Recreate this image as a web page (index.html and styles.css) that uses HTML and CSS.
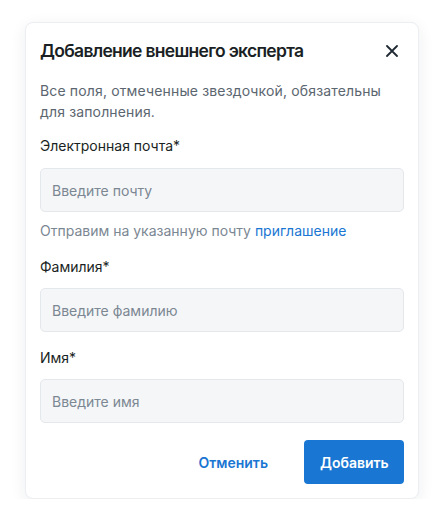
FILE: index.html
```html
<!DOCTYPE html>
<html lang="ru">
<head>
<meta charset="utf-8">
<link rel="stylesheet" href="styles.css">
</head>
<body>
<div class="card">
  <div class="head">
    <h1 class="title">Добавление внешнего эксперта</h1>
    <button class="close" aria-label="Закрыть">
      <svg width="12" height="12" viewBox="0 0 12 12"><path d="M1 1L11 11M11 1L1 11" stroke="#1f2933" stroke-width="1.8" stroke-linecap="round"/></svg>
    </button>
  </div>
  <p class="desc">Все поля, отмеченные звездочкой, обязательны для заполнения.</p>
  <div class="field first">
    <label class="label">Электронная почта*</label>
    <div class="input">Введите почту</div>
    <p class="hint">Отправим на указанную почту <a class="link">приглашение</a></p>
  </div>
  <div class="field">
    <label class="label">Фамилия*</label>
    <div class="input">Введите фамилию</div>
  </div>
  <div class="field">
    <label class="label">Имя*</label>
    <div class="input">Введите имя</div>
  </div>
  <div class="actions">
    <button class="btn btn-text">Отменить</button>
    <button class="btn btn-primary">Добавить</button>
  </div>
</div>
</body>
</html>
```
FILE: styles.css
```css
* { box-sizing: border-box; }
html, body { margin: 0; padding: 0; background: #ffffff; }
body {
  font-family: Inter, Roboto, "Noto Sans", sans-serif;
  color: #1f2933;
  padding: 22px 0 0 25px;
}
.card {
  width: 394px;
  height: 477px;
  background: #fff;
  border: 1px solid #eceef1;
  border-radius: 8px;
  box-shadow: 0 4px 16px rgba(30, 40, 60, 0.08);
  padding: 16px 14px 14px 14px;
  display: flex;
  flex-direction: column;
}
.head {
  display: flex;
  justify-content: space-between;
  align-items: center;
}
.title {
  margin: 0;
  font-size: 17.5px;
  line-height: 24px;
  font-weight: 600;
  color: #1a1f24;
  letter-spacing: -0.7px;
}
.close {
  width: 24px;
  height: 24px;
  border: 0;
  background: none;
  padding: 0;
  display: flex;
  align-items: center;
  justify-content: center;
}
.desc {
  margin: 17px 0 0;
  max-width: 345px;
  font-size: 14px;
  line-height: 21px;
  color: #5b6670;
  letter-spacing: 0.15px;
}
.field { display: flex; flex-direction: column; margin-top: 16px; }
.field.first { margin-top: 14px; }
.label {
  font-size: 14px;
  line-height: 20px;
  color: #1a1f24;
  margin-bottom: 11px;
}
.field.first .label { margin-bottom: 12px; }
.input {
  height: 44px;
  background: #f5f6f8;
  border: 1px solid #e4e7eb;
  border-radius: 5px;
  padding: 0 11px;
  display: flex;
  align-items: center;
  font-size: 14px;
  color: #7b8792;
}
.hint {
  margin: 8px 0 0;
  font-size: 14px;
  line-height: 21px;
  color: #7b8792;
}
.link { color: #1976d2; }
.actions {
  margin-top: 17px;
  display: flex;
  justify-content: flex-end;
  gap: 20px;
}
.btn {
  height: 44px;
  border: 0;
  border-radius: 4px;
  padding: 0 16px;
  font-family: Inter, Roboto, "Noto Sans", sans-serif;
  font-size: 14px;
  font-weight: 600;
  letter-spacing: 0px;
}
.btn-text { background: none; color: #1976d2; }
.btn-primary { background: #1976d2; color: #fff; width: 100px; }
```
